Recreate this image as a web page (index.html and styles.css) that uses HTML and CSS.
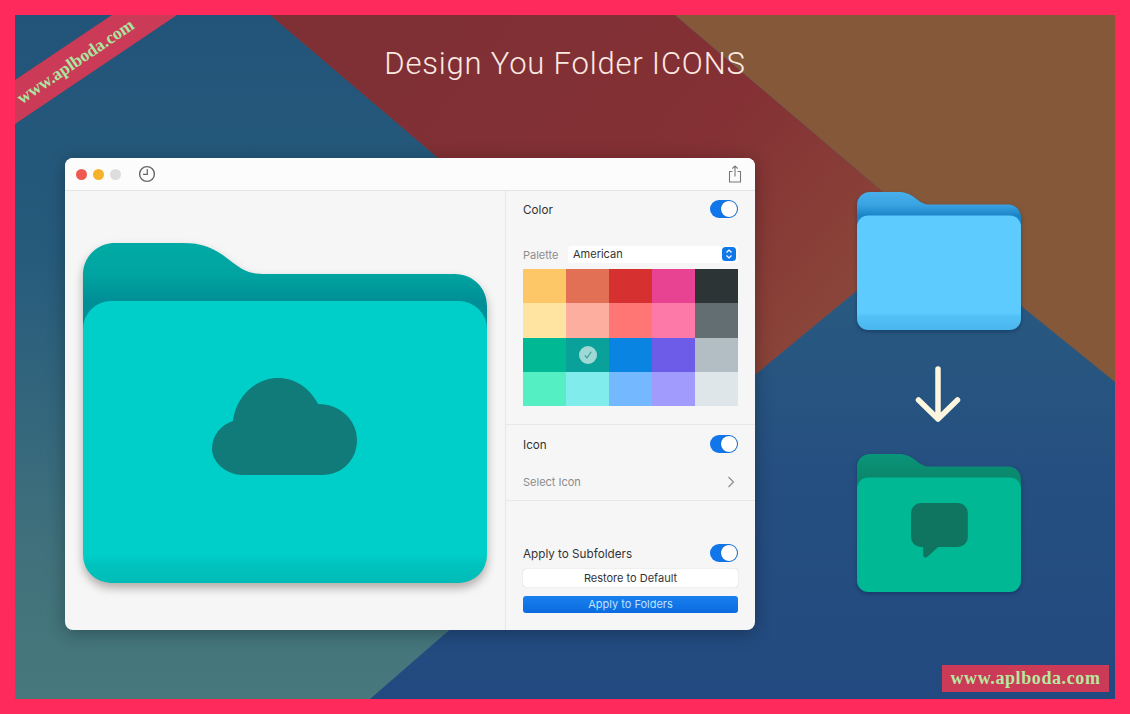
FILE: index.html
```html
<!DOCTYPE html>
<html lang="en">
<head>
    <meta charset="UTF-8">
    <meta name="viewport" content="width=device-width, initial-scale=1.0">
    <title>Design You Folder ICONS</title>
    <link rel="stylesheet" href="styles.css">
</head>
<body>
    <div class="frame">
        <div class="stage">
            <!-- Backdrop shapes, drawn in page coordinates -->
            <svg class="backdrop" viewBox="15 15 1100 684" width="1100" height="684">
                <defs>
                    <linearGradient id="bg-base" gradientUnits="userSpaceOnUse" x1="0" y1="200" x2="0" y2="699">
                        <stop offset="0" stop-color="#2a5f80"/>
                        <stop offset="0.55" stop-color="#254f80"/>
                        <stop offset="1" stop-color="#234a80"/>
                    </linearGradient>
                    <linearGradient id="bg-left" gradientUnits="userSpaceOnUse" x1="0" y1="15" x2="0" y2="699">
                        <stop offset="0" stop-color="#225479"/>
                        <stop offset="0.35" stop-color="#265b7c"/>
                        <stop offset="0.8" stop-color="#41727c"/>
                        <stop offset="1" stop-color="#46787c"/>
                    </linearGradient>
                    <linearGradient id="bg-red" gradientUnits="userSpaceOnUse" x1="400" y1="15" x2="800" y2="350">
                        <stop offset="0" stop-color="#7f3035"/>
                        <stop offset="0.6" stop-color="#843034"/>
                        <stop offset="1" stop-color="#8a4539"/>
                    </linearGradient>
                </defs>
                <rect x="15" y="15" width="1100" height="684" fill="url(#bg-base)"/>
                <polygon points="15,15 270,15 438,158 640,464 370,699 15,699" fill="url(#bg-left)"/>
                <polygon points="270,15 675,15 929,231 640,470 438,158" fill="url(#bg-red)"/>
                <polygon points="675,15 1115,15 1115,382 929,231" fill="#85583a"/>
                <polygon points="15,80 112,15 177,15 15,124" fill="#cb3a56"/>
            </svg>
            <span class="ribbon-text">www.aplboda.com</span>

            <h1 class="headline">Design You Folder ICONS</h1>

            <div class="content">
                <div class="window">
                    <div class="titlebar">
                        <span class="light light-red"></span>
                        <span class="light light-yellow"></span>
                        <span class="light light-grey"></span>
                        <svg class="history-icon" viewBox="0 0 18 18" width="18" height="18">
                            <circle cx="9" cy="9" r="7.4" fill="none" stroke="#666" stroke-width="1.4"/>
                            <path d="M9.3 4v5.4H5" fill="none" stroke="#666" stroke-width="1.2"/>
                        </svg>
                        <svg class="share-icon" viewBox="0 0 14 18" width="14" height="18">
                            <path d="M4.5 6.5H1.5v10.5h11V6.5H9.5" fill="none" stroke="#777" stroke-width="1.1"/>
                            <path d="M7 11.5V1M4.2 3.6L7 1l2.8 2.6" fill="none" stroke="#777" stroke-width="1.1"/>
                        </svg>
                    </div>
                    <div class="window-body">
                        <div class="preview">
                            <svg class="big-folder" viewBox="83 243 404 340" width="404" height="340">
                                <defs>
                                    <linearGradient id="teal-back" x1="0" y1="0" x2="0" y2="1">
                                        <stop offset="0" stop-color="#00aaa5"/>
                                        <stop offset="0.2" stop-color="#00a4a0"/>
                                        <stop offset="0.37" stop-color="#008f96"/>
                                    </linearGradient>
                                    <linearGradient id="teal-front" x1="0" y1="0" x2="0" y2="1">
                                        <stop offset="0" stop-color="#00cec9"/>
                                        <stop offset="0.9" stop-color="#00cec9"/>
                                        <stop offset="0.94" stop-color="#00c2bd"/>
                                        <stop offset="1" stop-color="#00bcb7"/>
                                    </linearGradient>
                                </defs>
                                <path fill="url(#teal-back)" d="M83 275C83 257 97 243 115 243H183C201 243 213 247 228 259C241 269 248 274 263 274H455C473 274 487 288 487 306V400H83Z"/>
                                <rect x="83" y="301" width="404" height="282" rx="28" fill="url(#teal-front)"/>
                                <path fill="#107b78" d="M243 475C226 475 212 462 212 449C212 435 221 425 233 421C236 397 255 378 278 378C295 378 310 388 318 404C340 404 357 420 357 440C357 460 342 475 322 475Z"/>
                            </svg>
                        </div>
                        <div class="sidebar">
                            <div class="row row-color">
                                <span class="row-label">Color</span>
                                <span class="toggle"></span>
                            </div>
                            <div class="palette-row">
                                <span class="palette-label">Palette</span>
                                <div class="select">
                                    <span>American</span>
                                    <svg class="stepper" viewBox="0 0 14 14" width="14" height="14">
                                        <rect width="14" height="14" rx="3.5" fill="#0f78e8"/>
                                        <path d="M4.5 5.500L7 3l2.500 2.500M4.500 8.500L7 11l2.500-2.500" fill="none" stroke="#fff" stroke-width="1.2"/>
                                    </svg>
                                </div>
                            </div>
                            <div class="swatches">
                                <span style="background:#fdc667"></span>
                                <span style="background:#e17055"></span>
                                <span style="background:#d63031"></span>
                                <span style="background:#e84393"></span>
                                <span style="background:#2d3436"></span>
                                <span style="background:#ffe3a0"></span>
                                <span style="background:#fdae9e"></span>
                                <span style="background:#ff7675"></span>
                                <span style="background:#fd79a8"></span>
                                <span style="background:#636e72"></span>
                                <span style="background:#00b894"></span>
                                <span class="selected" style="background:#0aa19a">
                                    <svg viewBox="0 0 18 18" width="18" height="18">
                                        <circle cx="9" cy="9" r="9" fill="#9fd8d4"/>
                                        <path d="M5.800 9.300L8 11.800l4.300-6" fill="none" stroke="#2f9d97" stroke-width="1.100"/>
                                    </svg>
                                </span>
                                <span style="background:#0984e3"></span>
                                <span style="background:#6c5ce7"></span>
                                <span style="background:#b2bec3"></span>
                                <span style="background:#55efc4"></span>
                                <span style="background:#81ecec"></span>
                                <span style="background:#74b9ff"></span>
                                <span style="background:#a29bfe"></span>
                                <span style="background:#dfe6e9"></span>
                            </div>
                            <div class="section section-icon">
                                <div class="row">
                                    <span class="row-label">Icon</span>
                                    <span class="toggle"></span>
                                </div>
                                <div class="row row-select">
                                    <span class="row-muted">Select Icon</span>
                                    <svg class="chevron" viewBox="0 0 8 12" width="8" height="12">
                                        <path d="M1.500 1l5 5-5 5" fill="none" stroke="#888" stroke-width="1.100"/>
                                    </svg>
                                </div>
                            </div>
                            <div class="section section-apply">
                                <div class="row">
                                    <span class="row-label">Apply to Subfolders</span>
                                    <span class="toggle"></span>
                                </div>
                                <div class="btn btn-restore">Restore to Default</div>
                                <div class="btn btn-apply">Apply to Folders</div>
                            </div>
                        </div>
                    </div>
                </div>

                <div class="example-column">
                    <svg class="small-folder" viewBox="83 243 404 340" width="164" height="138">
                        <defs>
                            <linearGradient id="blue-back" x1="0" y1="0" x2="0" y2="1">
                                <stop offset="0" stop-color="#48afea"/>
                                <stop offset="0.2" stop-color="#3aa3e2"/>
                                <stop offset="0.37" stop-color="#1a84c8"/>
                            </linearGradient>
                            <linearGradient id="blue-front" x1="0" y1="0" x2="0" y2="1">
                                <stop offset="0" stop-color="#5ecbff"/>
                                <stop offset="0.85" stop-color="#5ecbff"/>
                                <stop offset="0.88" stop-color="#54c1f6"/>
                                <stop offset="1" stop-color="#4ab6ee"/>
                            </linearGradient>
                            <linearGradient id="green-back" x1="0" y1="0" x2="0" y2="1">
                                <stop offset="0" stop-color="#0a9579"/>
                                <stop offset="0.37" stop-color="#0a876c"/>
                            </linearGradient>
                        </defs>
                        <path fill="url(#blue-back)" d="M83 275C83 257 97 243 115 243H183C201 243 213 247 228 259C241 269 248 274 263 274H455C473 274 487 288 487 306V400H83Z"/>
                        <rect x="83" y="301" width="404" height="282" rx="28" fill="url(#blue-front)"/>
                    </svg>
                    <svg class="arrow" viewBox="0 0 50 60" width="50" height="60">
                        <path d="M24 4V54M4.500 35L24 54L43.500 35" fill="none" stroke="#fdf6df" stroke-width="5.500" stroke-linecap="round" stroke-linejoin="round"/>
                    </svg>
                    <svg class="small-folder" viewBox="83 243 404 340" width="164" height="138">
                        <path fill="url(#green-back)" d="M83 275C83 257 97 243 115 243H183C201 243 213 247 228 259C241 269 248 274 263 274H455C473 274 487 288 487 306V400H83Z"/>
                        <rect x="83" y="301" width="404" height="282" rx="28" fill="#00b894"/>
                        <path fill="#107560" d="M240 364H332A24 24 0 0 1 356 388V448A24 24 0 0 1 332 472H283L258 495Q246 503 246 490V472H240A24 24 0 0 1 216 448V388A24 24 0 0 1 240 364Z"/>
                    </svg>
                </div>
            </div>

            <div class="watermark">www.aplboda.com</div>
        </div>
    </div>
</body>
</html>
```

FILE: styles.css
```css
body {
    margin: 0;
    font-family: Inter, "Liberation Sans", sans-serif;
    background-color: #fe2a5c;
}
.frame {
    width: 1130px;
    height: 714px;
    box-sizing: border-box;
    padding: 15px;
    background-color: #fe2a5c;
}
.stage {
    position: relative;
    width: 1100px;
    height: 684px;
}
.backdrop {
    position: absolute;
    top: 0;
    left: 0;
}
.ribbon-text {
    position: absolute;
    top: 36px;
    left: -8px;
    font-family: "Liberation Serif", serif;
    font-weight: bold;
    font-size: 17.5px;
    color: #a9e6a0;
    white-space: nowrap;
    transform: rotate(-34deg);
}
.headline {
    position: relative;
    margin: 0;
    padding-top: 29px;
    height: 39px;
    line-height: 40px;
    text-align: center;
    font-family: Roboto, sans-serif;
    font-weight: 300;
    font-size: 31px;
    letter-spacing: 0.8px;
    color: #fbe9e2;
}
.content {
    position: relative;
    display: flex;
    padding: 75px 0 0 50px;
}

/* App window */
.window {
    width: 690px;
    height: 472px;
    border-radius: 8px;
    overflow: hidden;
    background-color: #f6f6f7;
    box-shadow: 0 3px 18px rgba(0, 0, 0, 0.3);
    display: flex;
    flex-direction: column;
}
.titlebar {
    height: 32px;
    flex: none;
    display: flex;
    align-items: center;
    padding: 0 12px 0 11px;
    background-color: #fcfcfc;
    border-bottom: 1px solid #e4e4e4;
}
.light {
    width: 11px;
    height: 11px;
    border-radius: 50%;
    margin-right: 6px;
}
.light-red {
    background-color: #ee5a52;
}
.light-yellow {
    background-color: #f6b22b;
}
.light-grey {
    background-color: #dddddd;
}
.history-icon {
    margin-left: 11px;
}
.share-icon {
    margin-left: auto;
    margin-right: 1px;
}
.window-body {
    flex: 1;
    display: flex;
    min-height: 0;
}
.preview {
    width: 440px;
    flex: none;
    box-sizing: border-box;
    padding: 52px 0 0 18px;
}
.big-folder {
    display: block;
    overflow: visible;
    filter: drop-shadow(0 5px 5px rgba(70, 60, 50, 0.4));
}

/* Settings column */
.sidebar {
    flex: 1;
    border-left: 1px solid #e6e6e6;
    display: flex;
    flex-direction: column;
    color: #333;
    font-size: 11.7px;
}
.row {
    display: flex;
    align-items: center;
    justify-content: space-between;
    height: 18px;
    padding: 0 17px;
}
.row-color {
    margin-top: 9px;
}
.row-label {
    padding-top: 2px;
    color: #333;
}
.row-muted {
    color: #8c8c8c;
    font-size: 11px;
}
.chevron {
    margin-right: 3px;
}
.toggle {
    position: relative;
    width: 28px;
    height: 18px;
    border-radius: 9px;
    background-color: #1176ea;
}
.toggle::after {
    content: "";
    position: absolute;
    top: 1px;
    right: 1px;
    width: 16px;
    height: 16px;
    border-radius: 50%;
    background-color: #fff;
    box-shadow: 0 0 1px rgba(0, 0, 0, 0.5);
}
.palette-row {
    display: flex;
    align-items: center;
    margin-top: 27px;
    height: 18px;
    padding: 0 17px;
}
.palette-label {
    width: 45px;
    margin-top: 1px;
    color: #8c8c8c;
    font-size: 11px;
}
.select {
    flex: 1;
    display: flex;
    align-items: center;
    justify-content: space-between;
    height: 17px;
    padding: 0 2px 0 5px;
    background-color: #fff;
    border-radius: 3px;
    font-size: 11px;
    color: #333;
}
.stepper {
    display: block;
}
.swatches {
    display: grid;
    grid-template-columns: repeat(5, 43px);
    grid-auto-rows: 34.25px;
    margin: 6px 17px 0;
}
.swatches .selected {
    display: flex;
    align-items: center;
    justify-content: center;
}
.section {
    border-top: 1px solid #e8e8e8;
}
.section-icon {
    margin-top: 18px;
    height: 76px;
    padding-top: 10px;
    box-sizing: border-box;
}
.row-select {
    margin-top: 20px;
}
.section-apply {
    padding-top: 43px;
}
.btn {
    display: flex;
    align-items: center;
    justify-content: center;
    box-sizing: border-box;
    height: 17px;
    margin: 0 17px;
    border-radius: 3px;
    font-size: 11px;
}
.btn-restore {
    margin-top: 7px;
    height: 18px;
    color: #333;
    background-color: #fff;
    box-shadow: 0 0 1px rgba(0, 0, 0, 0.3);
}
.btn-apply {
    margin-top: 9px;
    padding-bottom: 2px;
    color: #bfe0ff;
    background: linear-gradient(#1a80ee, #0a6be0);
}

/* Before and after folders */
.example-column {
    margin: 34px 0 0 102px;
    width: 164px;
    display: flex;
    flex-direction: column;
    align-items: center;
}
.small-folder {
    display: block;
    overflow: visible;
    filter: drop-shadow(0 2px 2px rgba(0, 30, 70, 0.4));
}
.arrow {
    display: block;
    margin: 35px 0 29px;
}
.watermark {
    position: absolute;
    right: 6px;
    bottom: 7px;
    width: 167px;
    height: 27px;
    line-height: 27px;
    text-align: center;
    background-color: #cb3a56;
    color: #b5e8a0;
    font-family: "Liberation Serif", serif;
    font-weight: bold;
    font-size: 18px;
    letter-spacing: 0.6px;
}
```
